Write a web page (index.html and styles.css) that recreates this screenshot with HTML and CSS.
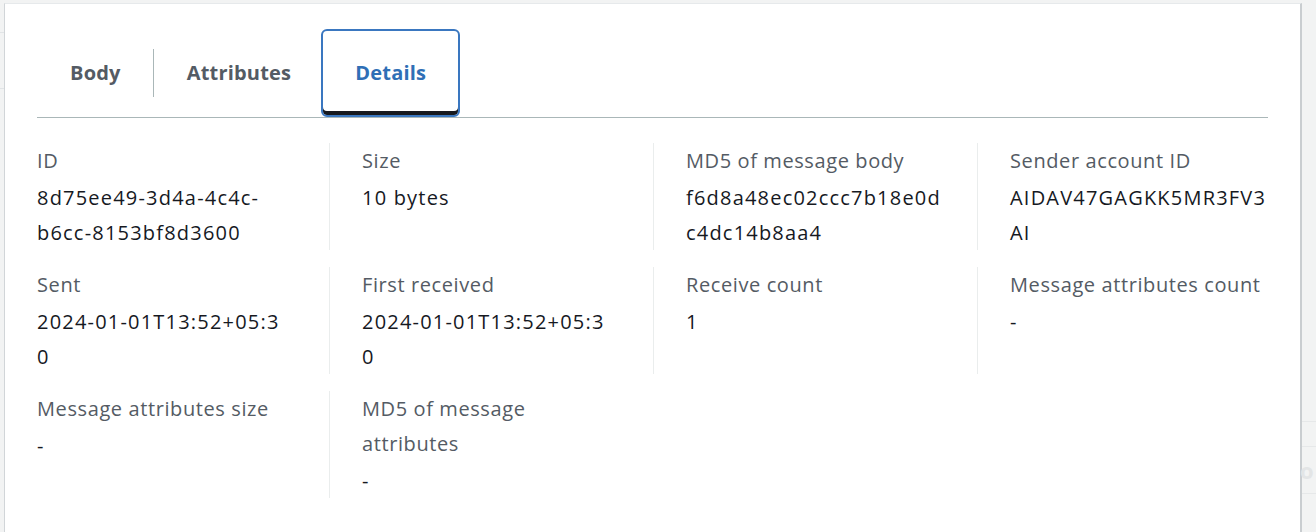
FILE: index.html
```html
<!DOCTYPE html>
<html lang="en">
<head>
<meta charset="utf-8">
<title>Message details</title>
<link rel="stylesheet" href="styles.css">
</head>
<body>
<div class="page">
  <div class="left-strip"></div>
  <div class="panel">
    <div class="tabs">
      <div class="tab">Body</div>
      <span class="tab-sep"></span>
      <div class="tab">Attributes</div>
      <div class="tab tab-active">Details</div>
    </div>
    <div class="kv-grid">
      <div class="kv kv-first">
        <div class="kv-label">ID</div>
        <div class="kv-value">8d75ee49-3d4a-4c4c-<br>b6cc-8153bf8d3600</div>
      </div>
      <div class="kv">
        <div class="kv-label">Size</div>
        <div class="kv-value">10 bytes</div>
      </div>
      <div class="kv">
        <div class="kv-label">MD5 of message body</div>
        <div class="kv-value">f6d8a48ec02ccc7b18e0d<br>c4dc14b8aa4</div>
      </div>
      <div class="kv kv-last">
        <div class="kv-label">Sender account ID</div>
        <div class="kv-value">AIDAV47GAGKK5MR3FV3<br>AI</div>
      </div>

      <div class="kv kv-first">
        <div class="kv-label">Sent</div>
        <div class="kv-value">2024-01-01T13:52+05:3<br>0</div>
      </div>
      <div class="kv">
        <div class="kv-label">First received</div>
        <div class="kv-value">2024-01-01T13:52+05:3<br>0</div>
      </div>
      <div class="kv">
        <div class="kv-label">Receive count</div>
        <div class="kv-value">1</div>
      </div>
      <div class="kv kv-last">
        <div class="kv-label">Message attributes count</div>
        <div class="kv-value">-</div>
      </div>

      <div class="kv kv-first">
        <div class="kv-label">Message attributes size</div>
        <div class="kv-value">-</div>
      </div>
      <div class="kv">
        <div class="kv-label">MD5 of message<br>attributes</div>
        <div class="kv-value">-</div>
      </div>
    </div>
  </div>
  <div class="right-strip">
    <div class="bg-row bg-row-a"></div>
    <div class="bg-row bg-row-b"><span class="bg-text">o</span></div>
    <div class="bg-row bg-row-c"></div>
  </div>
</div>
</body>
</html>
```
FILE: styles.css
```css
* { box-sizing: border-box; }
html, body { margin: 0; padding: 0; }
body {
  background: #f2f3f3;
  font-family: "Open Sans", "Noto Sans", sans-serif;
  width: 1316px;
  height: 532px;
  overflow: hidden;
}
.page {
  display: flex;
  height: 532px;
  border-top: 3px solid #f2f3f3;
}
.left-strip {
  width: 4px;
  flex: none;
  background: linear-gradient(#f2f3f3 0 29px, #e1e4e6 29px 30px, #f2f3f3 30px 85px, #e1e4e6 85px 86px, #f2f3f3 86px);
}
.panel {
  width: 1298px;
  flex: none;
  background: #fff;
  border-left: 1px solid #d1d5d8;
  border-top: 1px solid #e6e9eb;
  border-right: 2px solid #c9cdd0;
  padding: 25px 32px 0 32px;
}
.right-strip {
  flex: 1;
  display: flex;
  flex-direction: column;
  padding-top: 418px;
  background: #f2f3f3;
}
.bg-row { border-top: 1px solid #e6e8e9; }
.bg-row-a { height: 26px; }
.bg-row-b { height: 48px; display: flex; align-items: center; }
.bg-row-c { height: 40px; }
.bg-text { color: #e3e5e6; font-weight: 700; font-size: 22px; margin-left: -2px; }

.tabs {
  display: flex;
  align-items: center;
  border-bottom: 1px solid #aab7b8;
  height: 89px;
}
.tab {
  height: 88px;
  display: flex;
  align-items: center;
  padding: 0 33px 2px;
  font-weight: 700;
  font-size: 20px;
  letter-spacing: 0.2px;
  color: #545b64;
  align-self: flex-start;
}
.tab:first-child { padding-right: 32px; }
.tab-sep {
  width: 1px;
  height: 48px;
  background: #aab7b8;
  flex: none;
}
.tab-active {
  color: #2f6fb6;
  border: 2px solid #3a77c0;
  border-radius: 6px;
  padding: 0 32px 2px;
  margin-left: -3px;
  box-shadow: inset 0 -4px 0 #16191f;
}

.kv-grid {
  display: grid;
  grid-template-columns: 292px 324px 324px 291px;
  row-gap: 17px;
  margin-top: 25px;
}
.kv {
  border-left: 1px solid #eaeded;
  padding: 0 32px 0 32px;
  font-size: 20px;
  line-height: 35px;
  min-width: 0;
}
.kv-first { border-left: none; padding-left: 0; }
.kv-last { padding-right: 0; }
.kv-label { color: #545b64; margin-bottom: 2px; letter-spacing: 0.6px; }
.kv-value { color: #16191f; letter-spacing: 1.2px; white-space: nowrap; }
```
